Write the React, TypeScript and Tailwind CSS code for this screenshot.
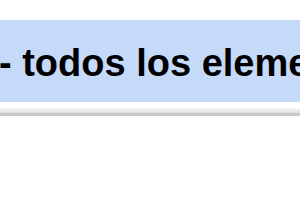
import React from 'react';

export default function App() {
  return (
    <div className="w-[300px] h-[200px] bg-white overflow-hidden">
      <div className="h-[20px]" />
      <div className="h-[82px] bg-[#c5d9f9] pt-[24px] overflow-hidden">
        <div className="ml-[-1px] whitespace-nowrap text-[38px] leading-none font-bold text-black font-['Liberation_Sans',Arial,sans-serif]">
          - todos los elementos
        </div>
      </div>
      <div className="h-[6px] bg-white" />
      <div className="h-[5px] bg-gradient-to-b from-[#f5f5f5] to-[#e2e2e2]" />
      <div className="h-[3px] bg-[#c8c8c8]" />
    </div>
  );
}
